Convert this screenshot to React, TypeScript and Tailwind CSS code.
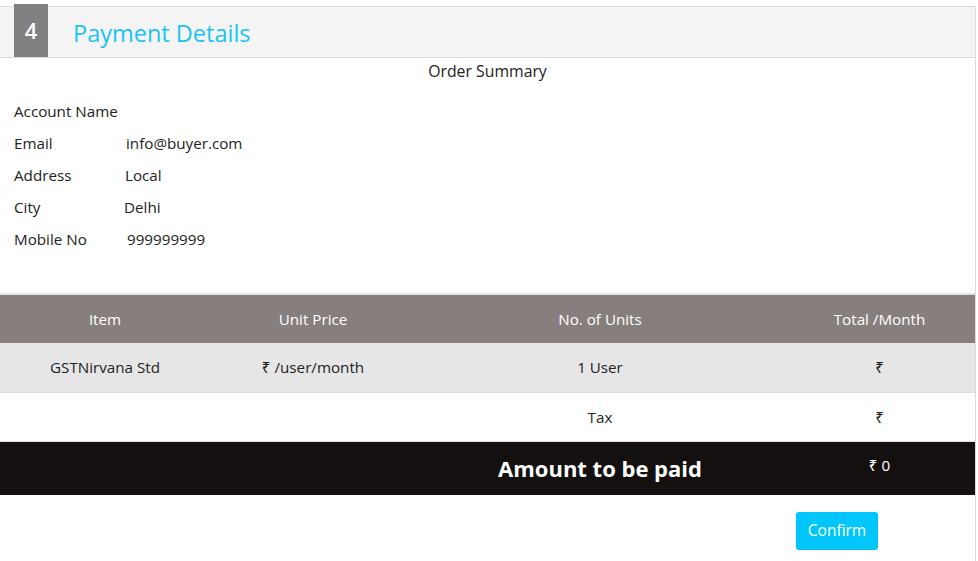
import React from 'react';

const font = { fontFamily: '"Open Sans", "Noto Sans", sans-serif' };

const details = [
  { label: 'Account Name', value: '', pad: 'pl-0' },
  { label: 'Email', value: 'info@buyer.com', pad: 'pl-[2px]' },
  { label: 'Address', value: 'Local', pad: 'pl-[1px]' },
  { label: 'City', value: 'Delhi', pad: 'pl-0' },
  { label: 'Mobile No', value: '999999999', pad: 'pl-[3px]' },
];

export default function App() {
  return (
    <div className="w-[978px] h-[561px] bg-white overflow-hidden pt-[6px] text-[#222]" style={font}>
      <div className="w-[976px] border-t border-r border-[#dcdcdc] bg-white h-[560px]">
        {/* Header */}
        <div className="relative h-[51px] bg-[#f4f4f4] border-b border-[#dcdcdc] flex items-center">
          <div className="absolute left-[14px] top-[-3px] w-[34px] h-[53px] bg-[#808080] text-white text-[22px] font-semibold flex items-center justify-center">
            4
          </div>
          <div className="ml-[73px] pt-[3px] text-[23.5px] text-[#19c4f4]">Payment Details</div>
        </div>

        <div className="text-center text-[15.8px] mt-[2px] leading-[22px]">Order Summary</div>

        <div className="mt-[19px] pl-[14px] text-[15.2px] leading-[20px] flex flex-col gap-[12px]">
          {details.map((d) => (
            <div key={d.label} className="flex">
              <div className="w-[110px]">{d.label}</div>
              <div className={d.pad}>{d.value}</div>
            </div>
          ))}
        </div>

        {/* Table */}
        <div className="mt-[44px] border-t-2 border-[#e3e3e3] text-[15.2px]">
          <div className="grid grid-cols-[210px_206px_368px_1fr] h-[48px] bg-[#867f7e] text-white items-center text-center">
            <div>Item</div>
            <div>Unit Price</div>
            <div>No. of Units</div>
            <div>Total /Month</div>
          </div>
          <div className="grid grid-cols-[210px_206px_368px_1fr] h-[50px] bg-[#e6e6e6] border-b border-[#dddddd] items-center text-center">
            <div>GSTNirvana Std</div>
            <div>₹ /user/month</div>
            <div>1 User</div>
            <div>₹</div>
          </div>
          <div className="grid grid-cols-[210px_206px_368px_1fr] h-[48px] bg-white items-center text-center">
            <div></div>
            <div></div>
            <div>Tax</div>
            <div>₹</div>
          </div>
          <div className="grid grid-cols-[210px_206px_368px_1fr] h-[54px] bg-[#141010] text-white items-center text-center border-t border-[#e3e3e3]">
            <div></div>
            <div></div>
            <div className="text-[22px] font-bold">Amount to be paid</div>
            <div className="text-[15.2px] mb-[7px]">₹ 0</div>
          </div>
        </div>

        <div className="flex pl-[796px] mt-[17px]">
          <button className="w-[82px] h-[38px] rounded-[3px] bg-[#00c6fb] text-white text-[15.5px]">Confirm</button>
        </div>
      </div>
    </div>
  );
}
